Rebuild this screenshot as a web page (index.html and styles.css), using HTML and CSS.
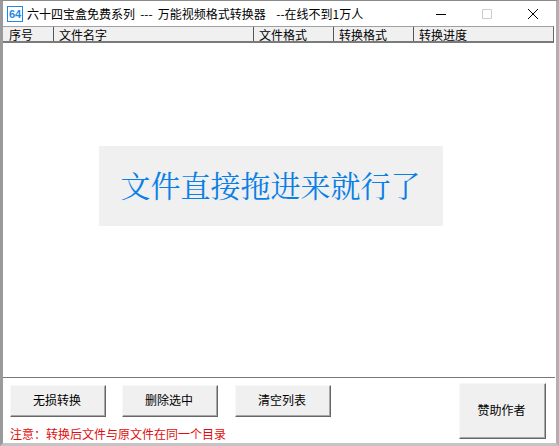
FILE: index.html
```html
<!DOCTYPE html>
<html>
<head>
	<meta charset="utf-8">
	<title>六十四宝盒免费系列</title>
	<link rel="stylesheet" href="styles.css">
</head>
<body>
	<div class="window">
		<header class="titlebar">
			<span class="app-icon">64</span>
			<span class="title">六十四宝盒免费系列 --- 万能视频格式转换器&nbsp; --在线不到1万人</span>
			<div class="controls">
				<svg class="ctl" width="12" height="12" viewBox="0 0 12 12"><path d="M1 6.5h10" stroke="#000" fill="none"/></svg>
				<svg class="ctl" width="12" height="12" viewBox="0 0 12 12"><path d="M1.5 1.5h9v9h-9z" stroke="#ccc" fill="none"/></svg>
				<svg class="ctl" width="12" height="12" viewBox="0 0 12 12"><path d="M1 1l10 10M11 1L1 11" stroke="#000" fill="none"/></svg>
			</div>
		</header>
		<div class="list-head">
			<span class="col col-no">序号</span>
			<span class="col col-name">文件名字</span>
			<span class="col col-fmt">文件格式</span>
			<span class="col col-to">转换格式</span>
			<span class="col col-prog">转换进度</span>
		</div>
		<main class="list-body">
			<div class="drop-hint">文件直接拖进来就行了</div>
		</main>
		<footer class="footer">
			<div class="actions">
				<div class="btn-row">
					<button class="btn">无损转换</button>
					<button class="btn">删除选中</button>
					<button class="btn btn-last">清空列表</button>
				</div>
				<p class="note">注意：转换后文件与原文件在同一个目录</p>
			</div>
			<button class="btn btn-big">赞助作者</button>
		</footer>
	</div>
</body>
</html>
```
FILE: styles.css
```css
html, body { margin: 0; height: 100%; }
body { background: #fff; font-family: "Noto Sans CJK SC", "Liberation Sans", sans-serif; font-size: 12px; color: #000; overflow: hidden; }
.window { height: 446px; box-sizing: border-box; display: flex; flex-direction: column; border-left: 3px solid #9a9a9a; border-right: 3px solid #b0b0b0; border-top: 1px solid #8a8a8a; border-bottom: 3px solid #c4c4c4; }
.titlebar { height: 25px; display: flex; align-items: center; padding-left: 4px; flex: none; }
.app-icon { width: 16px; height: 16px; box-sizing: border-box; border: 1px solid #1e88e5; color: #1e88e5; font: bold 11px/14px "Liberation Sans", sans-serif; text-align: center; flex: none; }
.title { margin-left: 4px; white-space: pre; flex: 1; word-spacing: 2.5px; }
.controls { display: flex; gap: 34px; padding-right: 17px; }
.ctl { display: block; }
.list-head { height: 14px; flex: none; display: flex; margin-right: 2px; background: #f0f0f0; border-top: 1px solid #a0a0a0; border-bottom: 2px solid #7a7a7a; border-right: 1px solid #666; line-height: 15px; overflow: hidden; }
.col { box-sizing: border-box; padding-left: 5px; border-right: 1px solid #555; white-space: nowrap; }
.col-no { width: 51px; padding-left: 6px; }
.col-name { width: 200px; }
.col-fmt { width: 80px; }
.col-to { width: 80px; }
.col-prog { flex: 1; border-right: 0; }
.list-body { flex: 1; display: flex; align-items: center; justify-content: center; padding: 0 18px 48px 0; }
.drop-hint { width: 344px; height: 80px; background: #f0f0f0; color: #0a80e6; font-family: "Noto Serif CJK SC", "Noto Sans CJK SC", serif; font-size: 30px; line-height: 76px; text-align: center; }
.footer { height: 66px; flex: none; box-sizing: border-box; margin-right: 1px; border-top: 1px solid #777; display: flex; justify-content: space-between; padding: 5px 9px 0 7px; }
.btn-row { display: flex; gap: 16px; margin-top: 2px; }
.btn { width: 96px; height: 32px; padding: 0 2px 3px 0; background: #f0f0f0; font: inherit; border: 1px solid; border-color: #f8f8f8 #666 #666 #f8f8f8; box-shadow: inset -1px -1px 0 #a8a8a8; }
.btn-last { margin-left: 1px; }
.btn-big { width: 87px; height: 56px; }
.note { margin: 9px 0 0; color: #e00c0c; line-height: 16px; }
```
